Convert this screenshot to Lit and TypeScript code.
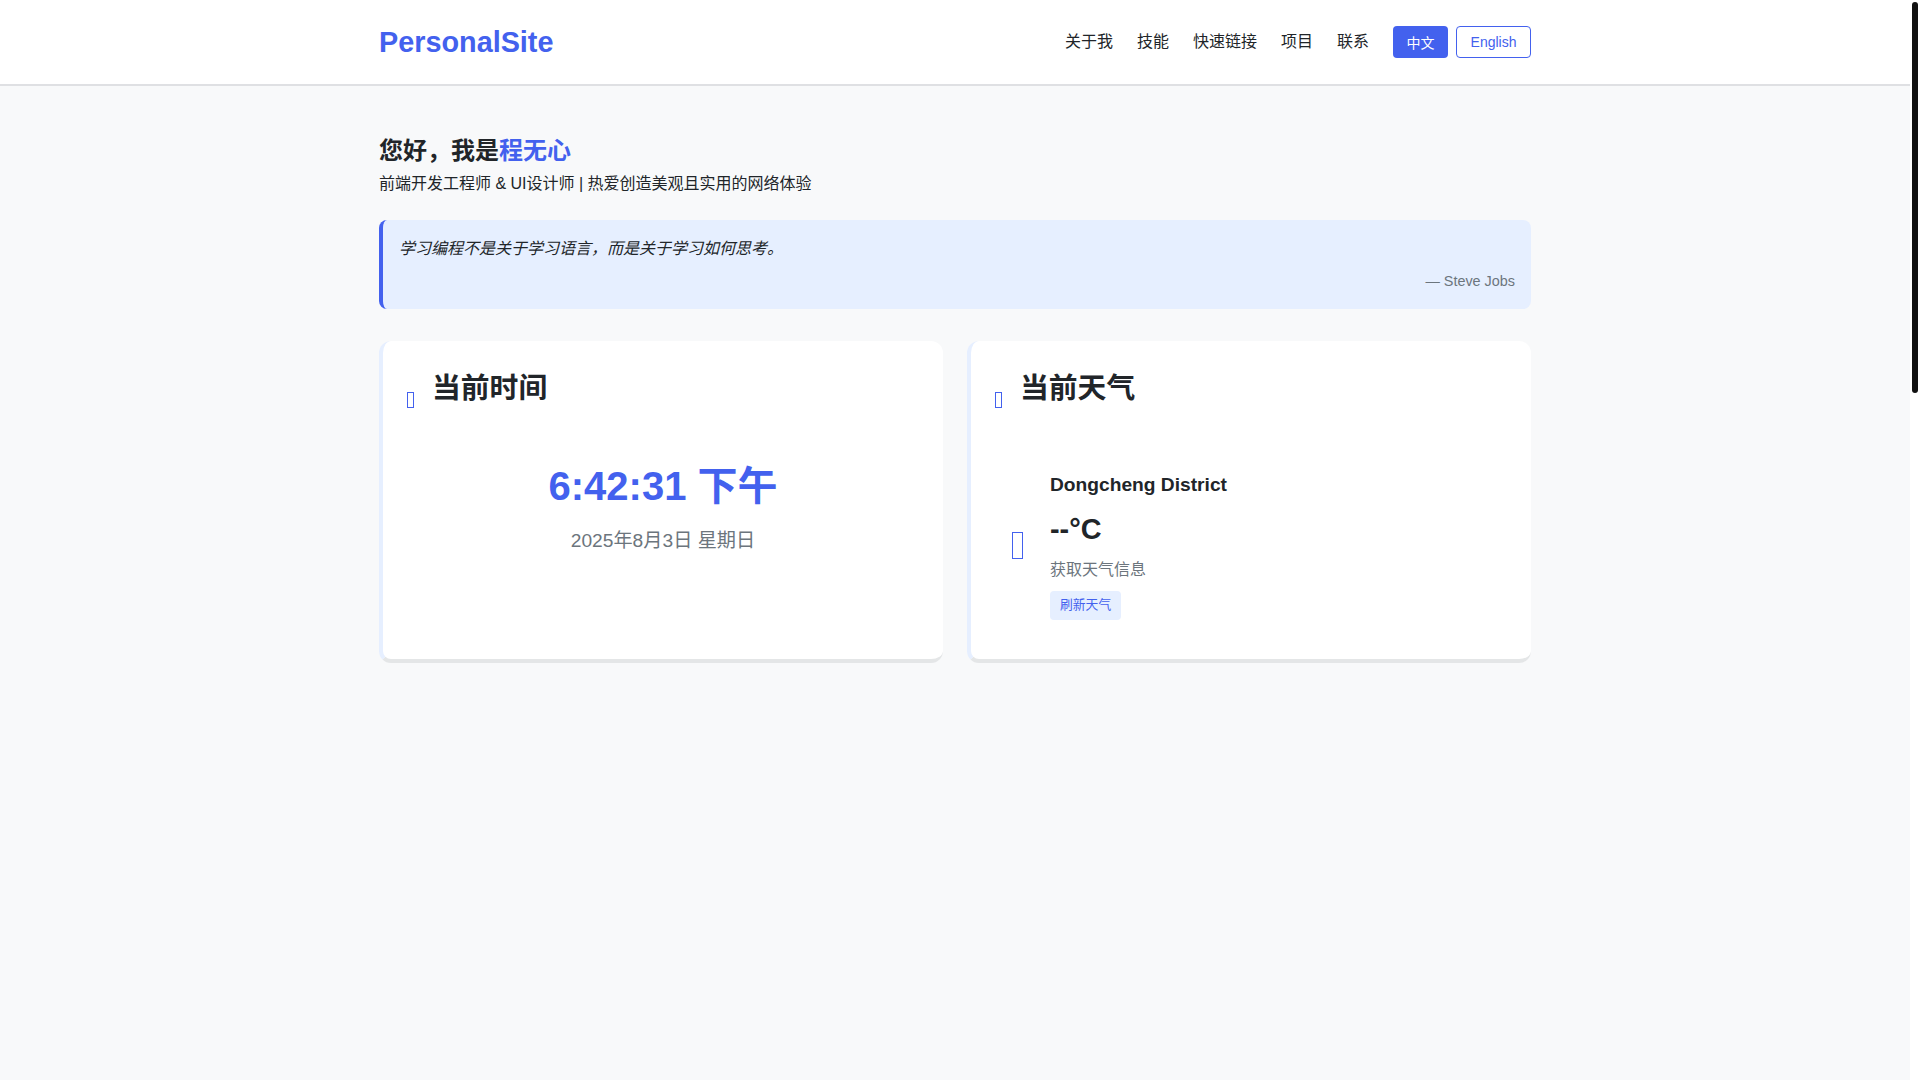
import { LitElement, html, css } from "lit";
import { customElement } from "lit/decorators.js";

@customElement("app-root")
export class AppRoot extends LitElement {
  static styles = css`
    :host {
      display: flex;
      height: 100vh;
      overflow: hidden;
      background: #f8f9fa;
      color: #212529;
      font-family: "Liberation Sans", "Noto Sans CJK SC", sans-serif;
      font-size: 16px;
      line-height: 1.6;
    }
    * { box-sizing: border-box; }
    .page { flex: 1; min-width: 0; }
    .scroll { width: 10px; background: #fff; padding: 2px 2px 0; flex: none; }
    .thumb { height: 391px; background: #111; border-radius: 3px; }
    header {
      background: #fff;
      height: 86px;
      border-bottom: 2px solid #dfe0e3;
    }
    .wrap { max-width: 1200px; margin: 0 auto; padding: 0 24px; }
    .bar { display: flex; align-items: center; justify-content: space-between; height: 84px; }
    .logo { font-size: 28.8px; font-weight: 700; color: #4361ee; }
    nav { display: flex; align-items: center; gap: 24px; }
    nav a { color: #212529; }
    .langs { display: flex; gap: 8px; }
    button { font-family: inherit; font-size: 14px; line-height: 1.6; border: 1px solid #4361ee; border-radius: 4px; padding: 4.3px 13.5px; background: #fff; color: #4361ee; }
    button.on { background: #4361ee; color: #fff; border: 0; padding-top: 6px; padding-bottom: 4.6px; }
    main.wrap { padding-top: 46px; }
    h1 { margin: 0 0 1px; font-size: 24px; line-height: 1.6; font-weight: 700; }
    h1 span { color: #4361ee; }
    .sub { margin: 0 0 23px; }
    .quote { background: #e6efff; border-left: 4px solid #4361ee; border-radius: 8px; padding: 16px; margin-bottom: 32px; height: 89px; }
    .quote p { margin: 0 0 8px; font-style: italic; }
    .quote div { text-align: right; font-size: 14.4px; color: #6c757d; }
    .cards { display: grid; grid-template-columns: 1fr 1fr; gap: 24px; }
    .card { height: 322px; background: #fff; border-left: 4px solid #e6efff; border-bottom: 4px solid #e4e6e7; border-radius: 12px; padding: 24px; }
    h2 { margin: 0; display: flex; align-items: flex-end; font-size: 28.8px; line-height: 1.6; font-weight: 700; }
    .tofu { display: block; border: 1px solid #4361ee; flex: none; }
    .tofu.s { width: 7px; height: 16px; margin-right: 18px; margin-bottom: 3px; }
    .tofu.l { width: 11px; height: 27px; border-width: 1.5px; }
    .clock { text-align: center; padding-top: 42.5px; }
    .time { font-size: 40px; font-weight: 700; color: #4361ee; margin-bottom: 8px; }
    .date { font-size: 19.2px; color: #6c757d; }
    .weather { display: flex; align-items: center; gap: 27px; padding: 59px 0 0 17px; }
    .loc { font-size: 19.2px; font-weight: 700; margin-bottom: 4.8px; }
    .temp { font-size: 28.8px; font-weight: 700; margin-bottom: 5.6px; }
    .desc { color: #6c757d; margin-bottom: 8px; }
    .refresh { display: block; font-size: 12.8px; background: #e6efff; border: 0; padding: 4.4px 10px; }
  `;

  render() {
    return html`
      <div class="page" lang="zh-CN">
        <header>
          <div class="wrap bar">
            <div class="logo">PersonalSite</div>
            <nav>
              <a>关于我</a><a>技能</a><a>快速链接</a><a>项目</a><a>联系</a>
              <div class="langs"><button class="on">中文</button><button>English</button></div>
            </nav>
          </div>
        </header>
        <main class="wrap">
          <h1>您好，我是<span>程无心</span></h1>
          <p class="sub">前端开发工程师 &amp; UI设计师 | 热爱创造美观且实用的网络体验</p>
          <div class="quote">
            <p>学习编程不是关于学习语言，而是关于学习如何思考。</p>
            <div>— Steve Jobs</div>
          </div>
          <div class="cards">
            <section class="card">
              <h2><i class="tofu s"></i>当前时间</h2>
              <div class="clock">
                <div class="time">6:42:31 下午</div>
                <div class="date">2025年8月3日 星期日</div>
              </div>
            </section>
            <section class="card">
              <h2><i class="tofu s"></i>当前天气</h2>
              <div class="weather">
                <i class="tofu l"></i>
                <div>
                  <div class="loc">Dongcheng District</div>
                  <div class="temp">--°C</div>
                  <div class="desc">获取天气信息</div>
                  <button class="refresh">刷新天气</button>
                </div>
              </div>
            </section>
          </div>
        </main>
      </div>
      <div class="scroll"><div class="thumb"></div></div>
    `;
  }
}
